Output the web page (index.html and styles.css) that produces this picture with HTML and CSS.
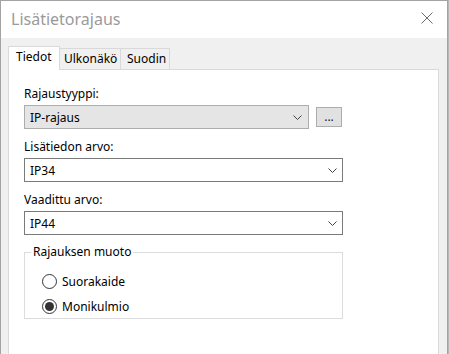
FILE: index.html
```html
<!DOCTYPE html>
<html lang="fi">
<head>
    <meta charset="UTF-8">
    <title>Lisätietorajaus</title>
    <link rel="stylesheet" href="styles.css">
</head>
<body>

<div class="window">
    <div class="titlebar">
        <span class="title">Lisätietorajaus</span>
        <svg class="close" width="12" height="12" viewBox="0 0 12 12">
            <path d="M0.5 0.5 L11.5 11.5 M11.5 0.5 L0.5 11.5" stroke="#6b6b6b" stroke-width="1" fill="none"/>
        </svg>
    </div>

    <div class="dialog-body">
        <div class="tabs">
            <div class="tab active">Tiedot</div>
            <div class="tab tab-ulkonako">Ulkonäkö</div>
            <div class="tab tab-suodin">Suodin</div>
        </div>

        <div class="panel">
            <div class="field">
                <label>Rajaustyyppi:</label>
                <div class="row">
                    <div class="combo combo-short readonly">
                        <span>IP-rajaus</span>
                        <svg class="chevron" width="9" height="5" viewBox="0 0 9 5"><path d="M0.5 0.5 L4.5 4.5 L8.5 0.5" stroke="#444" fill="none"/></svg>
                    </div>
                    <button class="dots">...</button>
                </div>
            </div>

            <div class="field">
                <label>Lisätiedon arvo:</label>
                <div class="combo">
                    <span>IP34</span>
                    <svg class="chevron" width="9" height="5" viewBox="0 0 9 5"><path d="M0.5 0.5 L4.5 4.5 L8.5 0.5" stroke="#444" fill="none"/></svg>
                </div>
            </div>

            <div class="field">
                <label>Vaadittu arvo:</label>
                <div class="combo">
                    <span>IP44</span>
                    <svg class="chevron" width="9" height="5" viewBox="0 0 9 5"><path d="M0.5 0.5 L4.5 4.5 L8.5 0.5" stroke="#444" fill="none"/></svg>
                </div>
            </div>

            <fieldset class="group">
                <legend>Rajauksen muoto</legend>
                <div class="radio"><span class="circle"></span>Suorakaide</div>
                <div class="radio"><span class="circle checked"></span>Monikulmio</div>
            </fieldset>
        </div>
    </div>
</div>

</body>
</html>
```

FILE: styles.css
```css
body {
    margin: 0;
    background: #b8b8b8;
    font-family: "Noto Sans", sans-serif;
    font-size: 12px;
    color: #000;
}

/* Window */
.window {
    width: 448px;
    height: 354px;
    box-sizing: border-box;
    border: 1px solid #a3a3a3;
    border-bottom: none;
    background: #f0f0f0;
    overflow: hidden;
}

.titlebar {
    height: 37px;
    background: #fff;
    display: flex;
    align-items: center;
    justify-content: space-between;
    padding: 0 14px 0 10px;
}

.title {
    font-size: 16px;
    color: #9a9a9a;
    margin-top: -2px;
}

.close {
    margin-top: -4px;
}

/* Tabs */
.dialog-body {
    padding: 8px 8px 0 7px;
}

.tabs {
    display: flex;
    align-items: flex-start;
    height: 23px;
}

.tab {
    box-sizing: border-box;
    border: 1px solid #d9d9d9;
    border-bottom: none;
    background: #f0f0f0;
    height: 21px;
    margin-top: 2px;
    line-height: 19px;
    padding-left: 4px;
}

.tab.active {
    background: #fff;
    height: 24px;
    margin-top: 0;
    width: 52px;
    padding-left: 7px;
    line-height: 20px;
    position: relative;
    z-index: 1;
}

.tab-ulkonako {
    border-left: none;
    width: 61px;
}

.tab-suodin {
    border-left: none;
    width: 49px;
    padding-left: 6px;
}

/* Panel */
.panel {
    background: #fff;
    border: 1px solid #d9d9d9;
    height: 300px;
    padding: 16px 0 0 15px;
}

.field {
    margin-bottom: 10px;
}

.field label {
    display: block;
    height: 16px;
    line-height: 16px;
    margin-bottom: 3px;
}

.row {
    display: flex;
    align-items: center;
    gap: 7px;
}

.combo {
    box-sizing: border-box;
    width: 319px;
    height: 24px;
    border: 1px solid #7a7a7a;
    background: #fff;
    display: flex;
    align-items: center;
    justify-content: space-between;
    padding: 0 5px 0 5px;
}

.combo-short {
    width: 285px;
}

.combo.readonly {
    background: #e5e5e5;
    border-color: #adadad;
    padding-right: 6px;
}

.dots {
    box-sizing: border-box;
    width: 26px;
    height: 20px;
    margin-top: -1px;
    border: 1px solid #adadad;
    background: #e1e1e1;
    font-family: "Noto Sans", sans-serif;
    font-size: 12px;
    line-height: 14px;
    padding: 0;
    color: #222;
}

/* Group box */
.group {
    box-sizing: border-box;
    width: 319px;
    height: 74px;
    margin: 8px 0 0 0;
    border: 1px solid #dcdcdc;
    padding: 10px 0 0 17px;
}

.group legend {
    padding: 0 2px;
    margin-left: -11px;
    line-height: 14px;
}

.radio {
    display: flex;
    align-items: center;
    height: 25px;
}

.circle {
    box-sizing: border-box;
    width: 15px;
    height: 15px;
    border: 1px solid #333;
    border-radius: 50%;
    margin-right: 5px;
    display: flex;
    align-items: center;
    justify-content: center;
    background: #fff;
}

.circle.checked::after {
    content: "";
    width: 9px;
    height: 9px;
    border-radius: 50%;
    background: #333;
}
```
